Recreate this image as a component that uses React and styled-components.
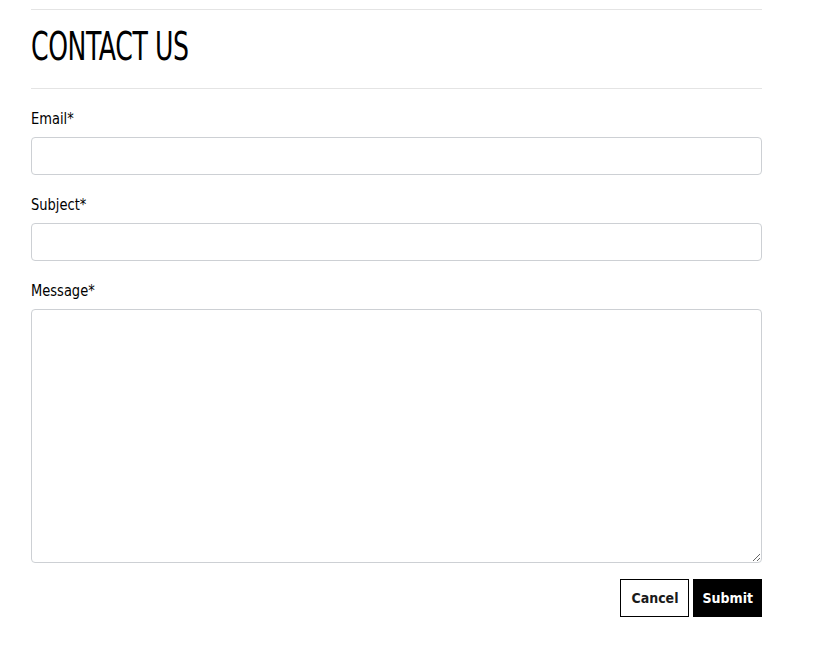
import styled, { createGlobalStyle } from 'styled-components';

const GlobalStyle = createGlobalStyle`
  body {
    margin: 0;
    background: #fff;
    font-family: "DejaVu Sans Condensed", "Liberation Sans", sans-serif;
    color: #111;
  }
  * { box-sizing: border-box; }
`;

const Page = styled.div`
  padding: 9px 0 0 31px;
  width: 762px;
`;

const Header = styled.div`
  border-top: 1px solid #e4e4e4;
  border-bottom: 1px solid #e4e4e4;
  height: 80px;
  display: flex;
  align-items: center;
`;

// Oswald is not available, so a condensed face is stretched a little taller
const Title = styled.h1`
  margin: 0 0 2px;
  font-size: 28px;
  line-height: 28px;
  font-weight: 400;
  letter-spacing: -0.4px;
  color: #000;
  transform: scaleY(1.38);
  transform-origin: left center;
`;

const Form = styled.form`
  display: flex;
  flex-direction: column;
  padding-top: 19px;
`;

const Field = styled.div`
  display: flex;
  flex-direction: column;
  margin-bottom: 19px;
`;

const Label = styled.label`
  font-size: 14.5px;
  line-height: 20px;
  color: #000;
  margin-bottom: 9px;
  transform: scaleY(1.12);
  transform-origin: left center;
`;

const Input = styled.input`
  height: 38px;
  width: 100%;
  border: 1px solid #cdd0d4;
  border-radius: 4px;
  padding: 0 10px;
  font: inherit;
  outline: none;
`;

const TextArea = styled.textarea`
  height: 254px;
  width: 100%;
  border: 1px solid #cdd0d4;
  border-radius: 4px;
  padding: 8px 10px;
  font: inherit;
  resize: vertical;
  outline: none;
`;

const Actions = styled.div`
  display: flex;
  justify-content: flex-end;
  gap: 4px;
  margin-top: -3px;
`;

const Button = styled.button`
  height: 38px;
  padding: 0 ${p => (p.$primary ? '8px' : '10px')};
  font-family: inherit;
  font-size: 14px;
  font-weight: 700;
  border: 1px solid #000;
  background: ${p => (p.$primary ? '#000' : '#fff')};
  color: ${p => (p.$primary ? '#fff' : '#1a1a1a')};
  cursor: pointer;
`;

export default function App() {
  return (
    <>
      <GlobalStyle />
      <Page>
        <Header>
          <Title>CONTACT US</Title>
        </Header>
        <Form onSubmit={e => e.preventDefault()}>
          <Field>
            <Label>Email*</Label>
            <Input type="email" />
          </Field>
          <Field>
            <Label>Subject*</Label>
            <Input type="text" />
          </Field>
          <Field>
            <Label>Message*</Label>
            <TextArea />
          </Field>
          <Actions>
            <Button type="button">Cancel</Button>
            <Button type="submit" $primary>Submit</Button>
          </Actions>
        </Form>
      </Page>
    </>
  );
}
